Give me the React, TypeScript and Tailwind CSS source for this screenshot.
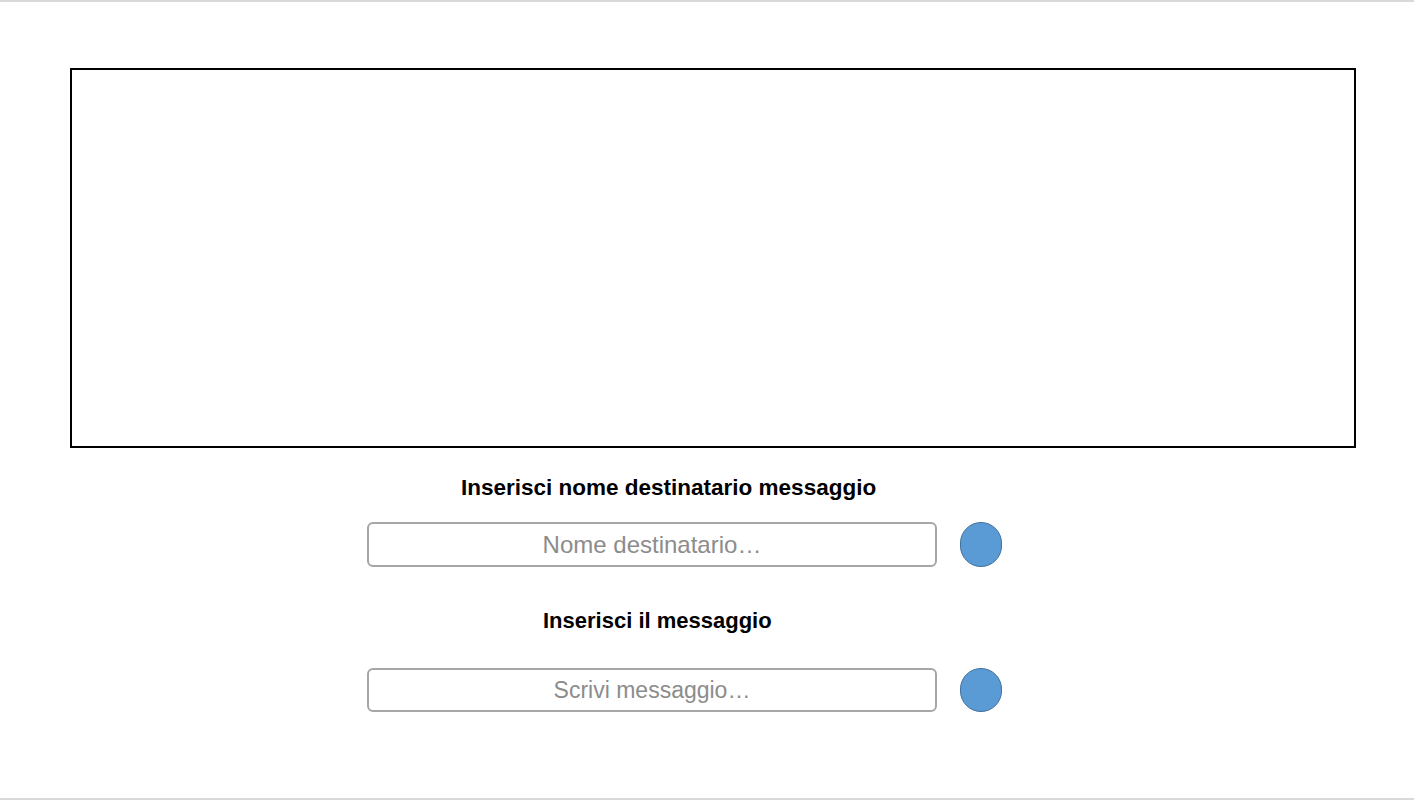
export default function App() {
  const font = { fontFamily: '"Liberation Sans", Arial, sans-serif' };
  return (
    <div className="w-[1414px] h-[800px] bg-white flex flex-col" style={font}>
      <div className="h-[2px] bg-[#d9d9d9]" />
      <div className="flex-1 flex flex-col">
        <div className="ml-[70px] mt-[66px] w-[1286px] h-[380px] border-2 border-black" />
        <div className="mt-[27px] h-[26px] flex items-center pl-[461px]">
          <span className="text-[22.5px] font-bold text-black leading-none">Inserisci nome destinatario messaggio</span>
        </div>
        <div className="mt-[21px] flex items-center pl-[367px] gap-[23px]">
          <div className="w-[570px] h-[45px] border-2 border-[#a6a6a6] rounded-[6px] flex items-center justify-center">
            <span className="text-[24px] text-[#8c8c8c]">Nome destinatario…</span>
          </div>
          <div className="w-[42px] h-[45px] rounded-full bg-[#5b9bd5] border-[1.5px] border-[#41719c]" />
        </div>
        <div className="mt-[41px] h-[26px] flex items-center pl-[543px]">
          <span className="text-[22px] font-bold text-black leading-none">Inserisci il messaggio</span>
        </div>
        <div className="mt-[34px] flex items-center pl-[367px] gap-[23px]">
          <div className="w-[570px] h-[44px] border-2 border-[#a6a6a6] rounded-[6px] flex items-center justify-center">
            <span className="text-[23px] text-[#8c8c8c]">Scrivi messaggio…</span>
          </div>
          <div className="w-[42px] h-[44px] rounded-full bg-[#5b9bd5] border-[1.5px] border-[#41719c]" />
        </div>
        <div className="flex-1" />
      </div>
      <div className="h-[2px] bg-[#d9d9d9]" />
    </div>
  );
}
